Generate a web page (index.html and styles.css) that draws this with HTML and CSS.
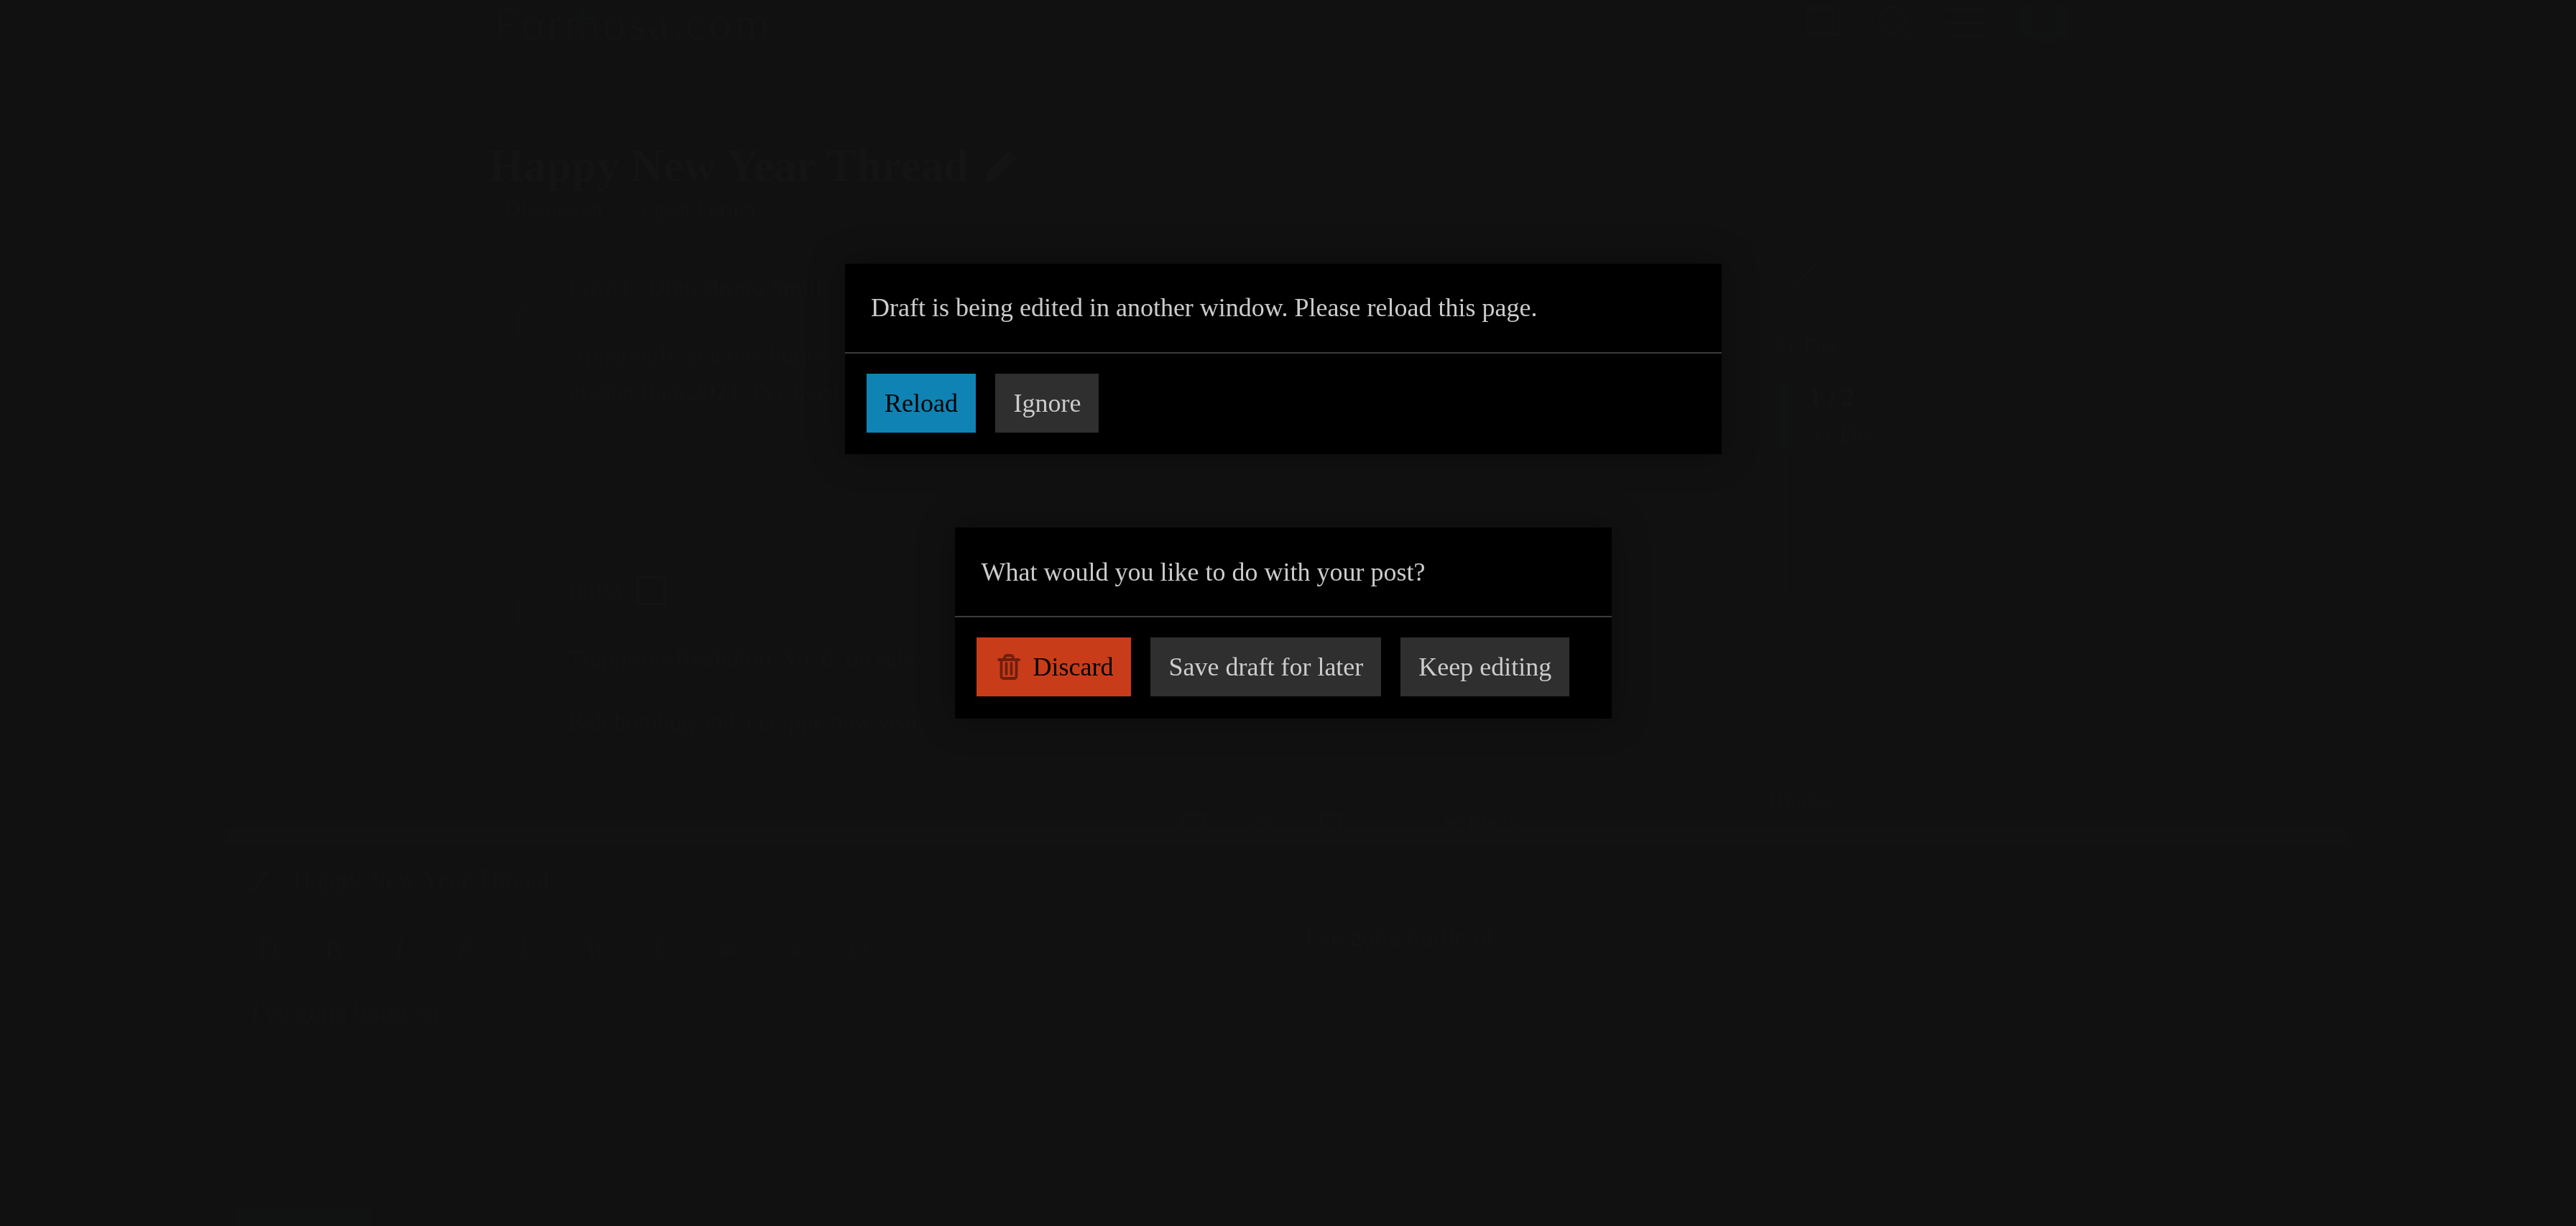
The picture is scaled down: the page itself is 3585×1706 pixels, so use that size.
FILE: index.html
```html
<!DOCTYPE html>
<html lang="en">
<head>
<meta charset="utf-8">
<title>Happy New Year Thread</title>
<link rel="stylesheet" href="styles.css">
</head>
<body>
<div class="page">
  <header class="site-header">
    <div class="logo">
      <svg class="logo-mark" viewBox="0 0 30 70" aria-hidden="true"><path d="M14 0h16l-3 30-12 40-5-34z"/></svg>
      Formosa.com
    </div>
    <div class="header-icons">
      <svg class="hicon" viewBox="0 0 64 60" aria-hidden="true"><path d="M4 8h38v36H4zM50 4v44H2"/></svg>
      <svg class="hicon" viewBox="0 0 64 60" aria-hidden="true"><circle cx="26" cy="26" r="20"/><path d="M40 40l14 14"/></svg>
      <svg class="hicon" viewBox="0 0 64 60" aria-hidden="true"><path d="M2 10h60M2 30h60M2 50h60"/></svg>
      <svg class="hicon hicon-fill" viewBox="0 0 80 60" aria-hidden="true"><path d="M6 4h18v46H6zM56 4h18v46H56zM24 40h32v16H24z"/></svg>
    </div>
  </header>
  <div class="content">
    <main class="topic">
      <h1 class="topic-title">Happy New Year Thread
        <svg class="pencil" viewBox="0 0 50 50" aria-hidden="true"><path d="M2 48l4-14L36 4l10 10-30 30z"/></svg>
      </h1>
      <div class="crumbs"><span>Discussion</span><span>Open Forum</span></div>
      <article class="post">
        <svg class="avatar" viewBox="0 0 92 92" aria-hidden="true"><circle cx="46" cy="46" r="44"/><path d="M18 30l28 30 28-30M46 60v30M30 14l16 20 16-20"/></svg>
        <div class="post-body">
          <div class="author">Erravi&nbsp;&nbsp;&nbsp;Dino Bruno Smith</div>
          <p class="post-text">Apparently in a few hours 2022 will begin.<br>greater than 2021. I've been</p>
        </div>
      </article>
      <article class="post post-second">
        <svg class="avatar" viewBox="0 0 92 92" aria-hidden="true"><circle cx="46" cy="46" r="44"/><path d="M46 26v40"/></svg>
        <div class="post-body">
          <div class="author">Intlxy <span class="author-badge"></span></div>
          <p class="post-text">Trappistes Rochefort No. 6, on sale</p>
          <p class="post-text">Bah humbug and a crappy new year</p>
        </div>
      </article>
      <div class="post-actions">
        <svg class="action" viewBox="0 0 38 22" aria-hidden="true"><path d="M4 2h30v18H4z"/></svg>
        <svg class="action" viewBox="0 0 38 22" aria-hidden="true"><path d="M4 20L19 2l15 18z"/></svg>
        <svg class="action" viewBox="0 0 38 22" aria-hidden="true"><path d="M6 2h26v20H6z"/></svg>
        <span class="action-dots">...</span>
        <span class="action-reply">↩&nbsp;Reply</span>
      </div>
    </main>
    <aside class="timeline">
      <svg class="link-icon" viewBox="0 0 40 40" aria-hidden="true"><path d="M4 36l32-32M10 20l10 10"/></svg>
      <div class="post-date">31 Dec</div>
      <div class="scroller">
        <div class="scroll-rail">
          <div class="scroll-bar"></div>
          <div class="scroll-rest"></div>
        </div>
        <div class="scroll-text"><strong>1 / 2</strong><span>31 Dec</span></div>
      </div>
      <div class="timeline-foot">Image</div>
    </aside>
  </div>
  <section class="composer">
    <div class="grip"></div>
    <div class="composer-title">
      <svg class="reply-icon" viewBox="0 0 30 36" aria-hidden="true"><path d="M4 34L24 4l4 4L8 36z"/></svg>
      <span>Happy New Year Thread</span>
    </div>
    <div class="composer-grid">
      <div class="editor">
        <div class="composer-tools">
          <span>D</span><span>B</span><span><i>I</i></span><span><i>∂</i></span><span>U</span><span><i>W</i></span><span>E</span><span>≡</span><span>≡</span><span>O</span>
        </div>
        <div class="composer-text">I've gotta bottle of</div>
      </div>
      <div class="preview">I've gotta bottle of</div>
    </div>
    <div class="composer-submit"></div>
  </section>
</div>

<div class="overlay">
  <div class="dialog dialog-wide">
    <div class="dialog-body">Draft is being edited in another window. Please reload this page.</div>
    <div class="dialog-footer">
      <button class="btn btn-primary">Reload</button>
      <button class="btn">Ignore</button>
    </div>
  </div>
  <div class="dialog dialog-narrow">
    <div class="dialog-body">What would you like to do with your post?</div>
    <div class="dialog-footer">
      <button class="btn btn-danger">
        <svg class="trash" viewBox="0 0 32 36" aria-hidden="true">
          <path d="M2 8h28M10 8V5.500C10 3.500 11.500 2 13.500 2h5C20.500 2 22 3.500 22 5.500V8M5.500 8v23c0 1.700 1.300 3 3 3h15c1.700 0 3-1.300 3-3V8M12.500 13v15M19.500 13v15"/>
        </svg>
        Discard
      </button>
      <button class="btn">Save draft for later</button>
      <button class="btn">Keep editing</button>
    </div>
  </div>
</div>
</body>
</html>
```
FILE: styles.css
```css
* { box-sizing: border-box; }
html, body { margin: 0; height: 100%; overflow: hidden; }
body {
  background: #111111;
  color: #131313;
  font-family: "Liberation Serif", "Times New Roman", serif;
  font-size: 36px;
}
.page { height: 1706px; display: flex; flex-direction: column; }

.site-header { display: flex; justify-content: space-between; height: 120px; padding: 0 700px 0 686px; flex: none; }
.logo { position: relative; font-size: 65px; line-height: 66px; letter-spacing: 3px; height: 70px; }
.logo-mark { position: absolute; left: 108px; top: 0; width: 22px; height: 68px; fill: #111312; }
.header-icons { display: flex; align-items: flex-start; gap: 38px; padding-top: 4px; }
.hicon { width: 60px; height: 56px; fill: none; stroke: #131313; stroke-width: 3; }
.hicon-fill { width: 79px; height: 60px; fill: #111312; stroke: none; }

.content { display: flex; height: 1034px; flex: none; padding-left: 675px; }
.topic { width: 1780px; padding-top: 76px; flex: none; }
.topic-title { margin: 0 0 0 5px; display: flex; align-items: center; gap: 20px; font-size: 63px; line-height: 70px; font-weight: 700; color: #141414; white-space: nowrap; }
.pencil { width: 50px; height: 50px; fill: #141414; }
.crumbs { display: flex; gap: 55px; margin: 5px 0 0 28px; font-size: 31px; line-height: 40px; }
.post { display: flex; gap: 24px; margin-top: 67px; height: 360px; }
.post-second { margin-top: 62px; height: 332px; }
.avatar { width: 92px; height: 92px; margin-top: -2px; flex: none; fill: none; stroke: #131313; stroke-width: 2; }
.post-second .avatar { margin-top: 4px; }
.author { display: flex; align-items: center; gap: 14px; font-size: 34px; line-height: 44px; margin-bottom: 48px; white-space: nowrap; }
.author-badge { width: 40px; height: 40px; border: 3px solid #141414; }
.post-text { margin: 0 0 38px; font-size: 34px; line-height: 50px; white-space: nowrap; }
.post-actions { display: flex; align-items: center; gap: 58px; height: 22px; margin-left: 966px; font-size: 30px; line-height: 22px; white-space: nowrap; }
.action { width: 38px; height: 22px; fill: none; stroke: #131313; stroke-width: 3; }

.timeline { display: flex; flex-direction: column; width: 300px; padding: 240px 0 19px 12px; font-size: 34px; line-height: 44px; }
.link-icon { display: block; width: 40px; height: 40px; margin-left: 28px; flex: none; fill: none; stroke: #131313; stroke-width: 3; }
.post-date { margin-top: 61px; }
.scroller { display: flex; align-items: flex-start; gap: 27px; margin-top: 25px; margin-left: 11px; }
.scroll-rail { display: flex; flex-direction: column; align-items: center; flex: none; width: 12px; }
.scroll-bar { width: 12px; height: 97px; background: #111312; border-radius: 6px; }
.scroll-rest { width: 4px; height: 200px; background: #111211; }
.scroll-text { display: flex; flex-direction: column; padding-top: 1px; gap: 8px; }
.scroll-text strong { font-size: 36px; color: #141414; }
.timeline-foot { margin-top: auto; margin-left: -5px; }

.composer { position: relative; flex: 1; margin-left: 314px; width: 2955px; }
.grip { height: 22px; background: #111211; }
.composer-title { display: flex; align-items: center; gap: 32px; margin: 23px 0 0 31px; line-height: 50px; }
.reply-icon { width: 30px; height: 36px; fill: #131313; }
.composer-grid { display: grid; grid-template-columns: 1502px 1fr; margin-top: 18px; }
.editor { padding-left: 36px; }
.composer-tools { display: flex; justify-content: space-between; width: 862px; margin-left: 3px; padding-top: 30px; font-size: 38px; line-height: 46px; }
.composer-tools span { width: 40px; text-align: center; }
.composer-text { margin-top: 43px; line-height: 46px; }
.preview { line-height: 46px; padding-top: 14px; }
.composer-submit { position: absolute; left: 12px; top: 526px; width: 189px; height: 30px; background: #111312; }

.overlay {
  position: fixed;
  inset: 0;
  padding: 367px 13px 0 0;
  display: flex;
  flex-direction: column;
  align-items: center;
  gap: 102px;
}
.dialog { background: #000; box-shadow: 0 0 45px rgba(0, 0, 0, 0.35); }
.dialog-wide { width: 1220px; }
.dialog-narrow { width: 914px; }
.dialog-body {
  height: 125px;
  padding: 0 36px 2px;
  display: flex;
  align-items: center;
  color: #cccccc;
  border-bottom: 2px solid #3b3b3b;
  white-space: nowrap;
}
.dialog-narrow .dialog-body { padding: 0 36.500px; }
.dialog-footer { display: flex; gap: 27px; padding: 28px 30px 30px; }
.dialog-wide .dialog-footer { gap: 27.500px; }
.dialog-narrow .dialog-footer { padding-bottom: 31px; }
.btn {
  display: inline-flex;
  align-items: center;
  gap: 17.500px;
  height: 82px;
  padding: 0 25px;
  border: 0;
  border-radius: 0;
  background: #2f2f2f;
  color: #cccccc;
  font: inherit;
  white-space: nowrap;
}
.btn-primary { background: #0f83b3; color: #000; }
.btn-danger { background: #c83c1a; color: #000; padding-left: 29px; }
.trash { width: 32px; height: 36px; fill: none; stroke: #6f1f0d; stroke-width: 3.800; stroke-linecap: round; stroke-linejoin: round; }
```
